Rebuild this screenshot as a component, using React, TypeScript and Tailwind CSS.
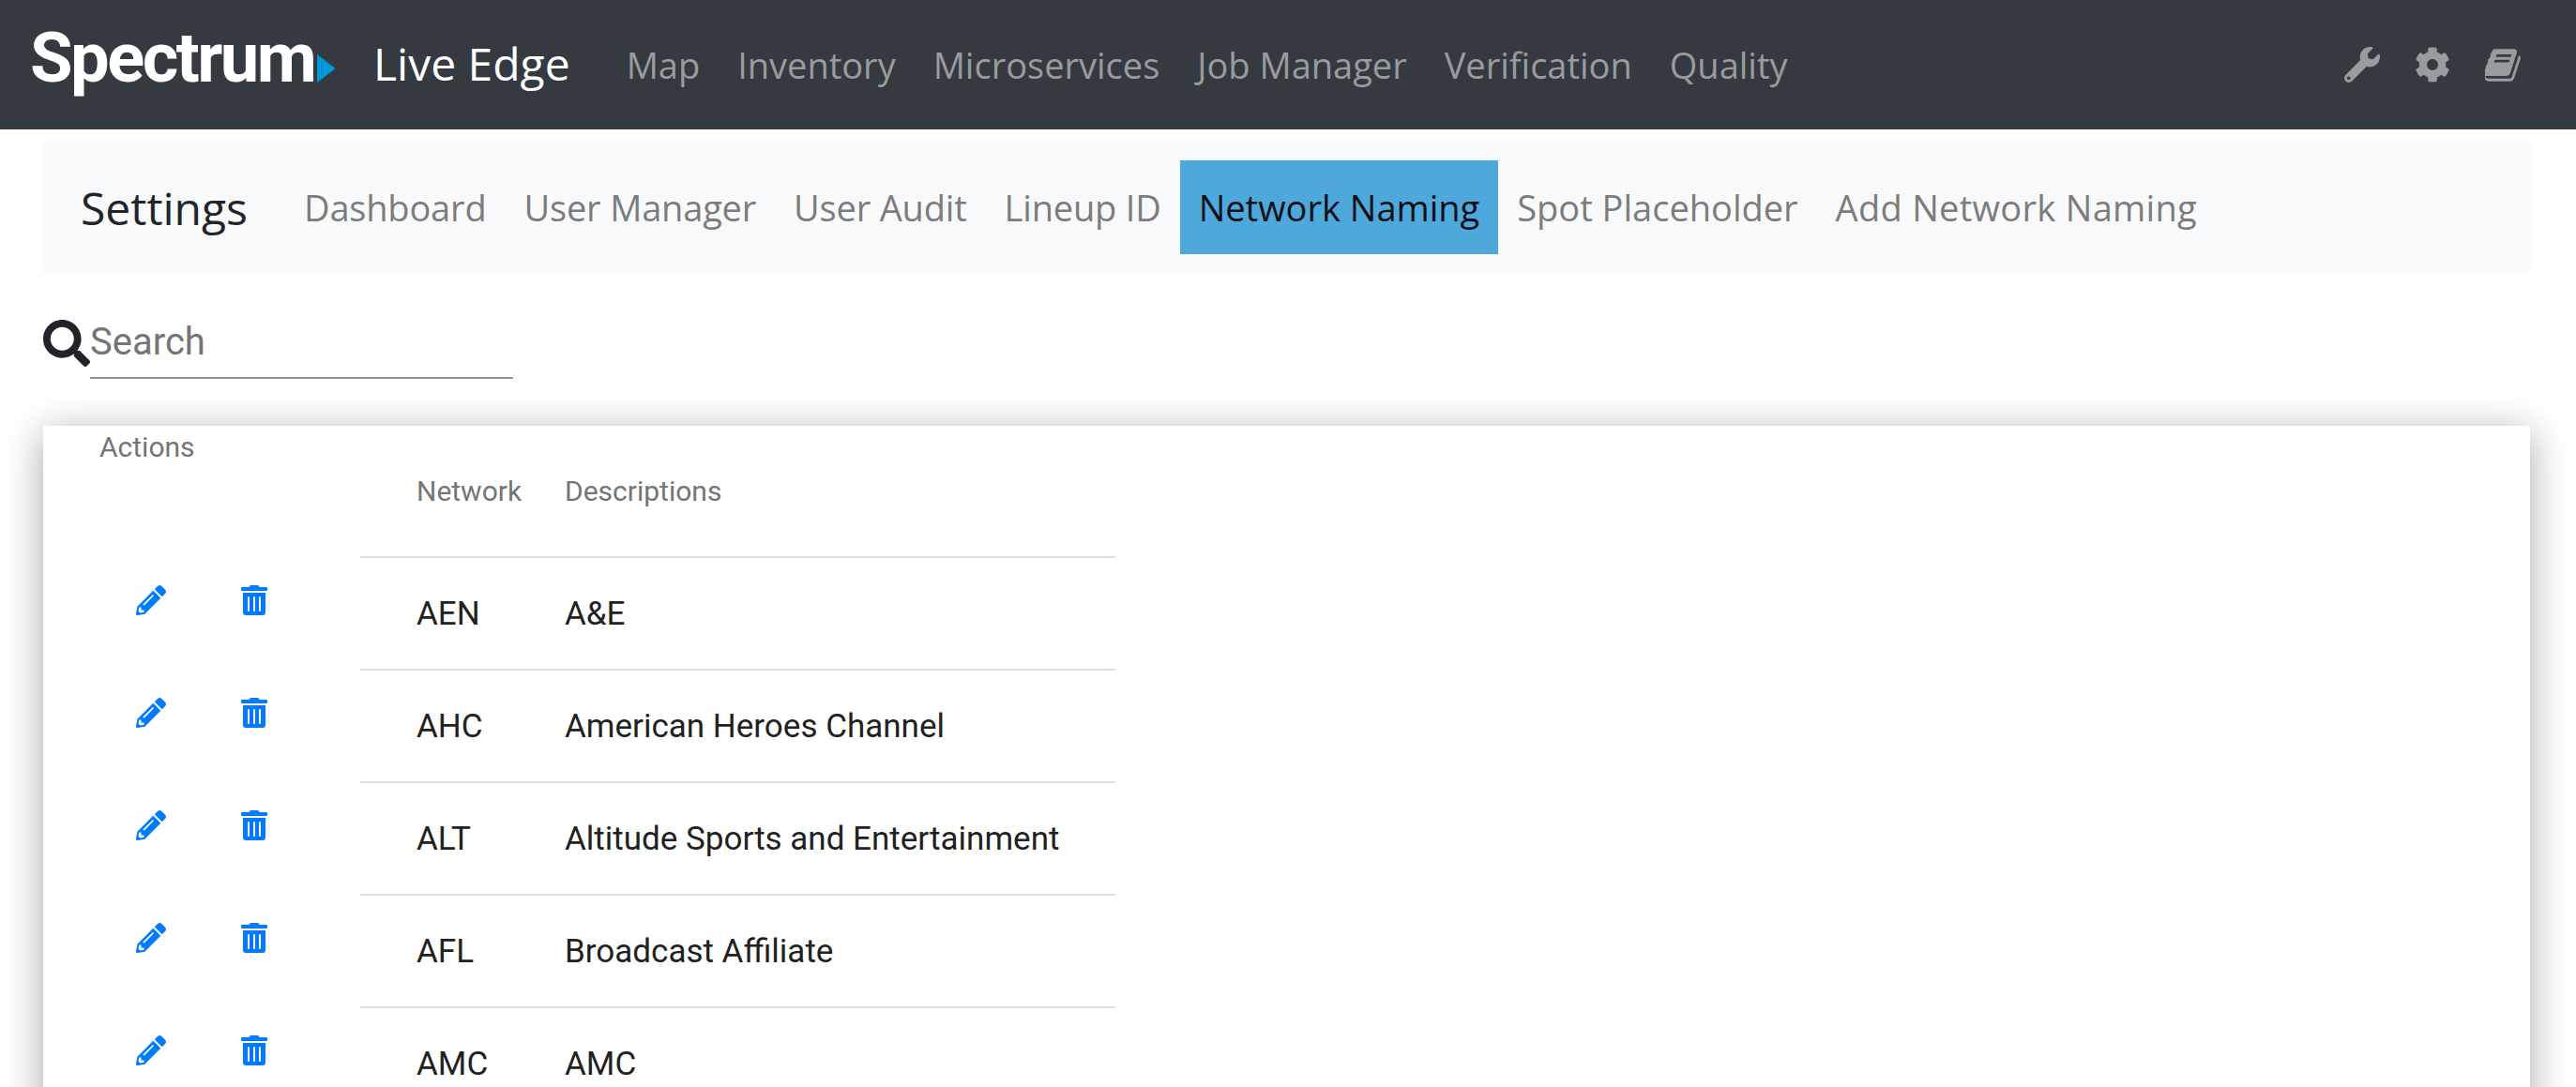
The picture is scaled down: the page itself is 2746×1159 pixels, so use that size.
import { FaWrench, FaCog, FaSearch, FaPencilAlt, FaTrashAlt } from "react-icons/fa";

const rows = [
  ["AEN", "A&E"],
  ["AHC", "American Heroes Channel"],
  ["ALT", "Altitude Sports and Entertainment"],
  ["AFL", "Broadcast Affiliate"],
  ["AMC", "AMC"],
];
const nav = ["Map", "Inventory", "Microservices", "Job Manager", "Verification", "Quality"];
const tabs = [
  { label: "Dashboard", cls: "tracking-[-0.18px] text-[#7c7c7d]" },
  { label: "User Manager", cls: "tracking-[-0.18px] text-[#7c7c7d]" },
  { label: "User Audit", cls: "tracking-[-0.18px] text-[#7c7c7d]" },
  { label: "Lineup ID", cls: "tracking-[-0.18px] text-[#7c7c7d]" },
  { label: "Network Naming", cls: "bg-[#4fa8dc] text-[#0d1117]" },
  { label: "Spot Placeholder", cls: "text-[#7c7c7d]" },
  { label: "Add Network Naming", cls: "tracking-[0.3px] text-[#7c7c7d]" },
];

function BookIcon() {
  return (
    <svg width="38" height="35" viewBox="90 120 1580 1560" fill="currentColor" preserveAspectRatio="none">
      <path d="M1639 478q40 57 18 129l-275 906q-19 64-76.5 107.5t-122.5 43.5h-923q-77 0-148.5-53.5t-99.5-131.5q-24-67-2-127 0-4 3-27t4-37q1-8-3-21.5t-3-19.5q2-11 8-21t16.5-23.5 16.5-23.5q23-38 45-91.5t30-91.5q3-10 .5-30t-.5-28q3-11 17-28t17-23q21-36 42-92t25-90q1-9-2.5-32t.5-28q4-13 22-30.5t22-22.5q19-26 42.5-84.5t27.5-96.5q1-8-3-25.5t-2-26.5q2-8 9-18t18-23 17-21q8-12 16.5-30.5t15-35 16-36 19.5-32 26.5-23.5 36-11.5 47.5 5.5l-1 3q38-9 51-9h761q74 0 114 56t18 130l-274 906q-36 119-71.5 153.5t-128.5 34.5h-869q-27 0-38 15-11 16-1 43 24 70 144 70h923q29 0 56-15.5t35-41.5l300-987q7-22 5-57 38 15 59 43zm-1064 2q-4 13 2 22.5t20 9.5h608q13 0 25.5-9.5t16.5-22.5l21-64q4-13-2-22.5t-20-9.5h-608q-13 0-25.5 9.5t-16.5 22.5zm-83 256q-4 13 2 22.5t20 9.5h608q13 0 25.5-9.5t16.5-22.5l21-64q4-13-2-22.5t-20-9.5h-608q-13 0-25.5 9.5t-16.5 22.5z" />
    </svg>
  );
}

export default function App() {
  return (
    <div className="h-[1159px] overflow-hidden bg-white font-['Roboto',sans-serif]">
      <header className="flex h-[138px] items-center bg-[#343a40] pl-[32px] pr-[59px] font-['Open_Sans',sans-serif]">
        <div className="flex w-[326px] shrink-0 items-center">
          <span className="mb-[14px] font-['Roboto',sans-serif] text-[74px] font-bold leading-none tracking-[-2.5px] text-white">Spectrum</span>
          <svg width="21" height="32" viewBox="0 0 21 32" className="ml-[3px] mt-[8px]"><path d="M0 0 L21 16 L0 32 Z" fill="#0099d8" /></svg>
        </div>
        <span className="ml-[40px] mb-[2px] text-[48px] leading-none text-white">Live Edge</span>
        <nav className="ml-[40px] flex">
          {nav.map((n) => (
            <span key={n} className="px-[20px] text-[38px] text-[#999c9f]">{n}</span>
          ))}
        </nav>
        <div className="ml-auto flex items-center gap-[37px] text-[38px] text-[#999c9f]">
          <FaWrench /><FaCog /><BookIcon />
        </div>
      </header>
      <div className="pl-[46px] pr-[49px]">
        <div className="mt-[13px] flex h-[140px] items-center bg-[#f8f9fa] pl-[40px] font-['Open_Sans',sans-serif]">
          <span className="mr-[40px] pt-[2px] text-[48px] text-[#212529]">Settings</span>
          {tabs.map((t) => (
            <span key={t.label} className={`flex h-[100px] items-center px-[20px] text-[38px] ${t.cls}`}>{t.label}</span>
          ))}
        </div>
        <div className="mt-[33px] flex h-[80px]">
          <FaSearch className="mb-[13px] self-end text-[50px] text-[#212529]" />
          <div className="flex w-[451px] items-center border-b-[2.5px] border-[#949494] pt-[3px] text-[40px] text-[#757575]">Search</div>
        </div>
        <div className="mt-[50px] h-[800px] bg-white shadow-[0_8px_40px_rgba(0,0,0,0.35)]">
          <div className="flex">
            <div className="w-[338px] shrink-0">
              <div className="h-[140px] pl-[60px] text-[30px] leading-[45px] text-[#757575]">Actions</div>
              {rows.map((r) => (
                <div key={r[0]} className="flex h-[120px] pl-[99px] pt-[30px] text-[32px] text-[#007bff]">
                  <FaPencilAlt /><FaTrashAlt className="ml-[78px]" />
                </div>
              ))}
            </div>
            <table className="w-[805px] table-fixed self-start border-collapse">
              <colgroup>
                <col className="w-[218px]" />
                <col />
              </colgroup>
              <thead>
                <tr className="h-[140px] text-left text-[30px] text-[#757575]">
                  <th className="pl-[60px] font-normal">Network</th>
                  <th className="font-normal">Descriptions</th>
                </tr>
              </thead>
              <tbody>
                {rows.map((r) => (
                  <tr key={r[0]} className="h-[120px] border-t-2 border-[#dee2e6] text-[35px] text-[#212121]">
                    <td className="pl-[60px] pt-[2px]">{r[0]}</td>
                    <td className="pt-[2px]">{r[1]}</td>
                  </tr>
                ))}
              </tbody>
            </table>
          </div>
        </div>
      </div>
    </div>
  );
}
